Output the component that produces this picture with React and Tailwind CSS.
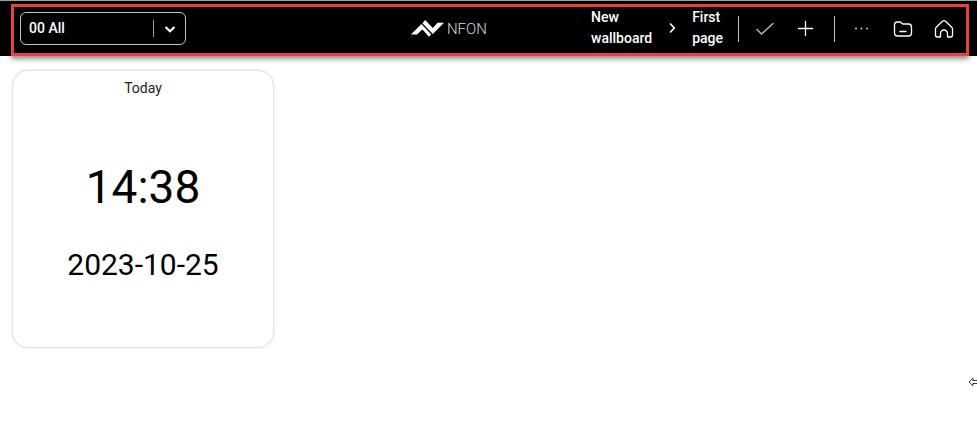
function Logo() {
  return (
    <a href="#home" className="flex items-center gap-[3px] text-white">
      <svg viewBox="0 0 33 17" className="h-[17px] w-[33px]" fill="currentColor" aria-hidden="true">
        <path d="M0 14.6 10.4 3.9 20.2 14.4 18 16.8 11.4 9.4 6 14.6Z" />
        <path d="M11.4 3.2 14.2 0 21.8 8 26.6 2.8H33L21.8 13.9Z" />
      </svg>
      <span className="text-[15px] leading-5 font-light text-[#dcdcdc]">NFON</span>
    </a>
  );
}

function Divider() {
  return <span className="h-[26px] w-px bg-[#c4c4c4]" />;
}

function IconButton({ label, children }) {
  return (
    <button type="button" aria-label={label} className="flex size-6 items-center justify-center">
      <svg
        viewBox="0 0 24 24"
        className="size-6"
        fill="none"
        stroke="currentColor"
        strokeWidth="1.3"
        strokeLinecap="round"
        strokeLinejoin="round"
      >
        {children}
      </svg>
    </button>
  );
}

function GroupSelect() {
  return (
    <div className="relative flex h-[33px] w-[166px] items-center">
      <select
        aria-label="Group"
        className="h-full w-full appearance-none rounded-md border border-[#c4c4c4] bg-black pb-px pl-2 text-sm font-medium text-white"
      >
        <option>00 All</option>
      </select>
      <div className="pointer-events-none absolute inset-y-0 right-0 flex items-center gap-[10px] pr-[10px]">
        <span className="h-[17px] w-px bg-[#a0a0a0]" />
        <svg viewBox="0 0 12 12" className="size-3" fill="none" stroke="currentColor" strokeWidth="2">
          <path d="M1.5 4 6 8.3 10.5 4" />
        </svg>
      </div>
    </div>
  );
}

function Toolbar() {
  return (
    <header className="relative border-t border-[#9aa3a3] bg-black text-white">
      <div className="grid h-[55px] grid-cols-[5fr_auto_6fr] items-center pr-[21px] pl-5">
        <GroupSelect />
        <Logo />
        <div className="flex items-center justify-end gap-[15px]">
          <nav aria-label="Breadcrumb" className="flex items-center gap-3 pb-0.5 text-sm leading-[21px] font-medium">
            <a href="#wallboard" className="w-min">New wallboard</a>
            <svg viewBox="0 0 16 16" className="size-4" fill="none" stroke="currentColor" strokeWidth="1.6">
              <path d="M6 3.5 10.3 8 6 12.5" />
            </svg>
            <a href="#page" className="w-min">First page</a>
          </nav>
          <Divider />
          <div className="flex items-center gap-[17px]">
            <IconButton label="Save">
              <path d="M3 12.5 7.5 17 19 6.5" stroke="#c4c4c4" />
            </IconButton>
            <IconButton label="Add">
              <path d="M10.5 4.500v14M3.500 11.500h14" />
            </IconButton>
          </div>
          <Divider />
          <div className="flex items-center gap-[17px]">
            <IconButton label="More">
              <path d="M6 11.5h.01M11.5 11.5h.01M17 11.5h.01" strokeWidth="2" stroke="#c4c4c4" />
            </IconButton>
            <IconButton label="Folders">
              <path d="M3.5 8a3 3 0 0 1 3-3h2.2c1.8 0 1.8 2 3.8 2h5a3 3 0 0 1 3 3v6a3 3 0 0 1-3 3h-11a3 3 0 0 1-3-3ZM9 14.5h6" />
            </IconButton>
            <IconButton label="Home">
              <path d="M3.5 12q0-1 .8-1.7L10.5 4.300a2.200 2.200 0 0 1 3 0l6.200 6q.8.7.8 1.700V18a2 2 0 0 1-2 2h-3v-3.500a3.500 3.500 0 0 0-7 0V20h-3a2 2 0 0 1-2-2Z" />
            </IconButton>
          </div>
        </div>
      </div>
      <div className="pointer-events-none absolute top-[3px] right-2 bottom-0 left-[11px] border-3 border-[#ec4040] shadow-[0_3px_5px_rgba(0,0,0,0.45)]" />
    </header>
  );
}

function ClockCard() {
  return (
    <section className="flex h-[278px] w-[262px] flex-col items-center rounded-2xl border border-[#e4e4e4] bg-white text-black shadow-[0_0_3px_rgba(0,0,0,0.12)]">
      <h2 className="mt-[7px] text-sm leading-5 text-[#222]">Today</h2>
      <time className="mt-[61px] text-[46px] leading-[56px]">14:38</time>
      <time className="mt-8 text-[30px] leading-9">2023-10-25</time>
    </section>
  );
}

export default function App() {
  return (
    <div className="relative min-h-screen bg-white font-['Roboto',sans-serif]">
      <Toolbar />
      <main className="px-3 py-[14px]">
        <ClockCard />
      </main>
      <svg
        viewBox="0 0 9 10"
        className="absolute top-[377px] right-0 h-[10px] w-[9px]"
        fill="white"
        stroke="#333344"
        aria-hidden="true"
      >
        <path d="M1 5 5 1.200V3.500H10V6.500H5V8.800Z" />
      </svg>
    </div>
  );
}
